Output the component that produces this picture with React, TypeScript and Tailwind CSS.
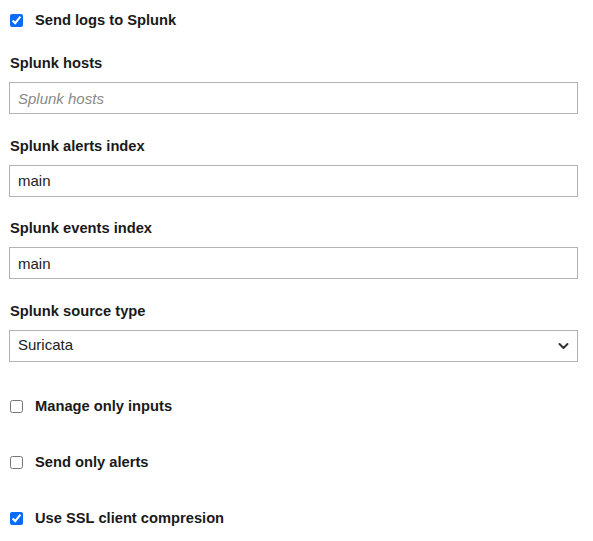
import React from "react";

const font = { fontFamily: '"Liberation Sans", Arial, sans-serif' };

function Check({ label, checked }: { label: string; checked: boolean }) {
  return (
    <label className="flex items-center h-[20px] text-[14.7px] font-bold text-[#1a1a1a]">
      <input
        type="checkbox"
        defaultChecked={checked}
        className="w-[13px] h-[13px] ml-[10px] mr-[12px] accent-[#0a6cff] m-0"
      />
      <span>{label}</span>
    </label>
  );
}

function Field({ label, value, placeholder }: { label: string; value?: string; placeholder?: string }) {
  return (
    <div className="flex flex-col">
      <div className="h-[18px] leading-[18px] text-[14.7px] font-bold text-[#1a1a1a] pl-[10px]">{label}</div>
      <input
        type="text"
        defaultValue={value}
        placeholder={placeholder}
        className="mt-[10px] ml-[9px] w-[569px] h-[32px] border border-[#b3b3b3] bg-white px-[8px] text-[15px] text-[#222] placeholder:italic placeholder:text-[#8a8a8a] outline-none"
        style={font}
      />
    </div>
  );
}

export default function App() {
  return (
    <div className="w-[593px] h-[541px] bg-white pt-[10px]" style={font}>
      <Check label="Send logs to Splunk" checked />
      <div className="mt-[24px] flex flex-col gap-[22.5px]">
        <Field label="Splunk hosts" placeholder="Splunk hosts" />
        <Field label="Splunk alerts index" value="main" />
        <Field label="Splunk events index" value="main" />
        <div className="flex flex-col">
          <div className="h-[18px] leading-[18px] text-[14.7px] font-bold text-[#1a1a1a] pl-[10px]">Splunk source type</div>
          <div className="relative mt-[10px] ml-[9px] w-[569px] h-[32px]">
            <select
              className="appearance-none w-full h-full border border-[#b3b3b3] bg-white px-[8px] text-[15px] text-[#222] outline-none"
              style={font}
              defaultValue="Suricata"
            >
              <option>Suricata</option>
            </select>
            <svg
              className="absolute right-[9px] top-[12px] pointer-events-none"
              width="11"
              height="8"
              viewBox="0 0 11 8"
            >
              <path d="M1.5 2 L5.5 6 L9.5 2" fill="none" stroke="#333" strokeWidth="2" strokeLinecap="round" strokeLinejoin="round" />
            </svg>
          </div>
        </div>
      </div>
      <div className="mt-[34.5px] flex flex-col gap-[36px]">
        <Check label="Manage only inputs" checked={false} />
        <Check label="Send only alerts" checked={false} />
        <Check label="Use SSL client compresion" checked />
      </div>
    </div>
  );
}
